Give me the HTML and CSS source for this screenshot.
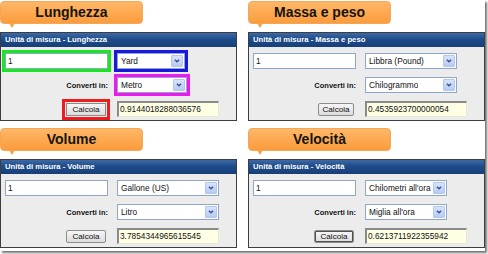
FILE: index.html
```html
<!DOCTYPE html>
<html lang="it">
<head>
<meta charset="utf-8">
<title>Unità di misura</title>
<link rel="stylesheet" href="styles.css">
</head>
<body>
<div class="sheet">

  <section class="panel">
    <div class="tab">Lunghezza</div>
    <div class="box">
      <div class="box-head">Unità di misura - Lunghezza</div>
      <div class="form">
        <div class="field hl-green">1</div>
        <div class="select w-yard hl-blue"><span class="val">Yard</span><span class="arrow"><svg viewBox="0 0 12 12" width="12" height="12"><path d="M3.5 4.5 L6 7 L8.5 4.5" fill="none" stroke="#3c4d8a" stroke-width="1.6"/></svg></span></div>
        <div class="label">Converti in:</div>
        <div class="select w-metro hl-magenta"><span class="val">Metro</span><span class="arrow"><svg viewBox="0 0 12 12" width="12" height="12"><path d="M3.5 4.5 L6 7 L8.5 4.5" fill="none" stroke="#3c4d8a" stroke-width="1.6"/></svg></span></div>
        <div class="btn-cell"><span class="btn w-40 hl-red">Calcola</span></div>
        <div class="result">0.9144018288036576</div>
      </div>
    </div>
  </section>

  <section class="panel">
    <div class="tab">Massa e peso</div>
    <div class="box">
      <div class="box-head">Unità di misura - Massa e peso</div>
      <div class="form">
        <div class="field">1</div>
        <div class="select w-92"><span class="val">Libbra (Pound)</span><span class="arrow"><svg viewBox="0 0 12 12" width="12" height="12"><path d="M3.5 4.5 L6 7 L8.5 4.5" fill="none" stroke="#3c4d8a" stroke-width="1.6"/></svg></span></div>
        <div class="label">Converti in:</div>
        <div class="select w-92"><span class="val">Chilogrammo</span><span class="arrow"><svg viewBox="0 0 12 12" width="12" height="12"><path d="M3.5 4.5 L6 7 L8.5 4.5" fill="none" stroke="#3c4d8a" stroke-width="1.6"/></svg></span></div>
        <div class="btn-cell"><span class="btn">Calcola</span></div>
        <div class="result">0.4535923700000054</div>
      </div>
    </div>
  </section>

  <section class="panel">
    <div class="tab">Volume</div>
    <div class="box">
      <div class="box-head">Unità di misura - Volume</div>
      <div class="form">
        <div class="field">1</div>
        <div class="select w-102"><span class="val">Gallone (US)</span><span class="arrow"><svg viewBox="0 0 12 12" width="12" height="12"><path d="M3.5 4.5 L6 7 L8.5 4.5" fill="none" stroke="#3c4d8a" stroke-width="1.6"/></svg></span></div>
        <div class="label">Converti in:</div>
        <div class="select w-102"><span class="val">Litro</span><span class="arrow"><svg viewBox="0 0 12 12" width="12" height="12"><path d="M3.5 4.5 L6 7 L8.5 4.5" fill="none" stroke="#3c4d8a" stroke-width="1.6"/></svg></span></div>
        <div class="btn-cell"><span class="btn w-40">Calcola</span></div>
        <div class="result">3.7854344965615545</div>
      </div>
    </div>
  </section>

  <section class="panel">
    <div class="tab">Velocità</div>
    <div class="box">
      <div class="box-head">Unità di misura - Velocità</div>
      <div class="form">
        <div class="field">1</div>
        <div class="select w-82"><span class="val">Chilometri all'ora</span><span class="arrow"><svg viewBox="0 0 12 12" width="12" height="12"><path d="M3.5 4.5 L6 7 L8.5 4.5" fill="none" stroke="#3c4d8a" stroke-width="1.6"/></svg></span></div>
        <div class="label">Converti in:</div>
        <div class="select w-82"><span class="val">Miglia all'ora</span><span class="arrow"><svg viewBox="0 0 12 12" width="12" height="12"><path d="M3.5 4.5 L6 7 L8.5 4.5" fill="none" stroke="#3c4d8a" stroke-width="1.6"/></svg></span></div>
        <div class="btn-cell"><span class="btn w-40 focused">Calcola</span></div>
        <div class="result">0.6213711922355942</div>
      </div>
    </div>
  </section>

</div>
</body>
</html>
```

FILE: styles.css
```css
* { box-sizing: border-box; }

html, body {
  margin: 0;
  padding: 0;
  background: #ffffff;
}

body {
  width: 488px;
  height: 254px;
  overflow: hidden;
  font-family: "Liberation Sans", Arial, sans-serif;
  color: #111;
}

.sheet {
  width: 485px;
  height: 251px;
  display: grid;
  grid-template-columns: 237px 237px;
  grid-template-rows: 127px 124px;
  column-gap: 11px;
  box-shadow: 2px 2px 2px rgba(0, 0, 0, 0.55);
}

.panel {
  display: flex;
  flex-direction: column;
}

.tab {
  position: relative;
  width: 143px;
  height: 23px;
  margin-top: 1px;
  border-radius: 4px;
  background: linear-gradient(#ffb768, #fb9c3c);
  border: 1px solid #f3a75a;
  font-size: 14px;
  font-weight: bold;
  line-height: 21px;
  text-align: center;
  color: #141414;
}

.tab::after {
  content: "";
  position: absolute;
  left: 8px;
  bottom: -5px;
  width: 0;
  height: 0;
  border-left: 3px solid transparent;
  border-right: 3px solid transparent;
  border-top: 5px solid #f9a04a;
}

.box {
  margin-top: 8px;
  border: 1px solid #3e3e3e;
  background: #ececec;
}

.box-head {
  height: 14px;
  padding-left: 4px;
  background: linear-gradient(#3d6aa6, #1e4c8a 45%, #173f78);
  color: #ffffff;
  font-size: 7.7px;
  font-weight: bold;
  line-height: 14px;
  white-space: nowrap;
}

.form {
  display: grid;
  grid-template-columns: 103px auto;
  grid-template-rows: 16px 16px 16px;
  column-gap: 9px;
  row-gap: 8px;
  padding: 6px 0 3px 4px;
  font-size: 8.3px;
  align-items: center;
}

.field {
  height: 16px;
  background: #ffffff;
  border: 1px solid #8ea6c8;
  padding-left: 2px;
  line-height: 14px;
}

.select {
  display: flex;
  align-items: center;
  justify-content: space-between;
  height: 16px;
  background: #ffffff;
  border: 1px solid #8ea6c8;
  padding: 1px 1px 1px 3px;
  white-space: nowrap;
  overflow: hidden;
}

.select .val {
  overflow: hidden;
}

.select .arrow {
  flex: none;
  display: flex;
  width: 12px;
  height: 12px;
  background: linear-gradient(#d6e3fc, #b6cbf4);
  border: 1px solid #b4c6ea;
  border-radius: 1px;
}

.select .arrow svg {
  display: block;
  width: 10px;
  height: 10px;
}

.w-yard { width: 68px; }
.w-metro { width: 70px; }
.w-92 { width: 92px; }
.w-102 { width: 102px; }
.w-82 { width: 82px; }

.label {
  text-align: right;
  font-weight: bold;
  font-size: 7.5px;
}

.btn-cell {
  display: flex;
  justify-content: flex-end;
  padding-right: 2px;
}

.btn {
  display: block;
  width: 36px;
  height: 13px;
  background: linear-gradient(#f6f6f6, #dcdcdc);
  border: 1px solid #8c8c8c;
  border-radius: 2px;
  text-align: center;
  line-height: 11px;
  font-size: 8.1px;
}

.btn.w-40 { width: 40px; }

.btn.focused {
  box-shadow: inset 0 0 0 1px #505050;
}

.result {
  width: 102px;
  height: 16px;
  background: #ffffe4;
  border-top: 2px solid #8a8a8a;
  border-left: 2px solid #8a8a8a;
  border-right: 1px solid #e8e8d8;
  border-bottom: 1px solid #e8e8d8;
  padding-left: 1px;
  line-height: 13px;
  white-space: nowrap;
}

.hl-green { outline: 3px solid #19e61e; }
.hl-blue { outline: 3px solid #1818e0; }
.hl-magenta { outline: 3px solid #f018f0; }
.hl-red { outline: 3px solid #ee1c1c; outline-offset: 1px; border-radius: 0; }
```
